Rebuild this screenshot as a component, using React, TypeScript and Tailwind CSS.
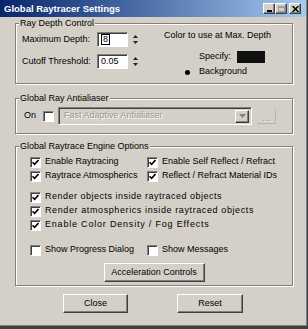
import React from "react";

const raised =
  "bg-[#d4d0c8] border border-t-white border-l-white border-r-[#404040] border-b-[#404040] shadow-[inset_-1px_-1px_0_#808080]";
const sunken =
  "border border-t-[#808080] border-l-[#808080] border-r-white border-b-white shadow-[inset_1px_1px_0_#404040]";

function Check({ on }: { on?: boolean }) {
  return (
    <span className={`w-[11px] h-[11px] shrink-0 bg-white flex items-center justify-center ${sunken}`}>
      {on && (
        <svg width="7" height="7" viewBox="0 0 7 7">
          <path d="M0.5 3.2 L2.6 5.3 L6.5 1" fill="none" stroke="#000" strokeWidth="1.6" />
        </svg>
      )}
    </span>
  );
}

function Opt({ on, label, wide }: { on?: boolean; label: string; wide?: string }) {
  return (
    <div className="flex items-center gap-[4px] h-[14px] whitespace-nowrap">
      <Check on={on} />
      <span className={wide}>{label}</span>
    </div>
  );
}

function Group({ title, h, mt, children }: { title: string; h: string; mt: string; children: React.ReactNode }) {
  return (
    <fieldset
      className={`ml-[15px] w-[278px] ${h} ${mt} border border-[#808080] shadow-[inset_1px_1px_0_#fff,1px_1px_0_#fff]`}
    >
      <legend className="ml-[3px] px-[1px] bg-[#d4d0c8] leading-[11px]">{title}</legend>
      {children}
    </fieldset>
  );
}

function Spinner({ value, boxed }: { value: string; boxed?: boolean }) {
  return (
    <div className="flex items-center gap-[3px]">
      <div className={`w-[31px] h-[15px] bg-white flex items-center pl-[3px] ${sunken}`}>
        {boxed ? <span className="border border-black px-[1px] leading-[9px]">{value}</span> : <span>{value}</span>}
      </div>
      <div className="w-[8px] h-[15px] flex flex-col justify-center gap-[3px] items-center">
        <svg width="5" height="3" viewBox="0 0 5 3">
          <path d="M0 3 L2.5 0 L5 3 Z" fill="#222" />
        </svg>
        <svg width="5" height="3" viewBox="0 0 5 3">
          <path d="M0 0 L2.5 3 L5 0 Z" fill="#222" />
        </svg>
      </div>
    </div>
  );
}

export default function App() {
  return (
    <div className="w-[308px] h-[329px] bg-[#d4d0c8] border-r border-b-[3px] border-[#404040] font-['Liberation_Sans',Arial,sans-serif] text-[9px] text-black overflow-hidden">
      <div className="h-full border-r border-b border-[#808080] flex flex-col">
        {/* title bar */}
        <div className="h-[17px] shrink-0 flex items-center justify-between pl-[4px] pr-[5px] bg-gradient-to-r from-[#0a246a] to-[#a6caf0]">
          <span className="text-white font-bold text-[9.5px] leading-none">Global Raytracer Settings</span>
          <div className="flex items-center gap-[2px]">
            <div className="flex">
              <div className={`w-[12px] h-[11px] flex items-end justify-center pb-[1px] ${raised}`}>
                <div className="w-[5px] h-[2px] bg-black" />
              </div>
              <div className={`w-[12px] h-[11px] flex items-center justify-center ${raised}`}>
                <div className="w-[7px] h-[6px] border border-[#a0a0a0] border-t-2" />
              </div>
            </div>
            <div className={`w-[12px] h-[11px] flex items-center justify-center ${raised}`}>
              <svg width="7" height="6" viewBox="0 0 7 6">
                <path d="M0.5 0 L6.5 6 M6.5 0 L0.5 6" stroke="#000" strokeWidth="1.5" />
              </svg>
            </div>
          </div>
        </div>

        <Group title="Ray Depth Control" h="h-[66px]" mt="mt-[1px]">
          <div className="flex pt-[1px]">
            <div className="w-[148px] pl-[6px] pt-[2px] flex flex-col gap-[7px]">
              <div className="flex items-center">
                <span className="w-[75px]">Maximum Depth:</span>
                <Spinner value="8" boxed />
              </div>
              <div className="flex items-center">
                <span className="w-[75px]">Cutoff Threshold:</span>
                <Spinner value="0.05" />
              </div>
            </div>
            <div className="flex flex-col">
              <span className="leading-[11px]">Color to use at Max. Depth</span>
              <div className="flex items-center mt-[9px] pl-[35px]">
                <span className="w-[38px]">Specify:</span>
                <div className="w-[28px] h-[12px] bg-[#111]" />
              </div>
              <div className="flex items-center mt-[3px] h-[11px] pl-[21px]">
                <span className="w-[14px] flex">
                  <span className="w-[5px] h-[5px] rounded-full bg-black" />
                </span>
                <span>Background</span>
              </div>
            </div>
          </div>
        </Group>

        <Group title="Global Ray Antialiaser" h="h-[41px]" mt="mt-[9px]">
          <div className="flex items-center pt-[3px] pl-[8px] h-[21px]">
            <span className="w-[19px]">On</span>
            <Check />
            <div className={`ml-[4px] w-[194px] h-[18px] bg-[#d4d0c8] flex items-center justify-between pl-[5px] pr-[2px] ${sunken}`}>
              <span className="text-[#9a978f] [text-shadow:1px_1px_0_#fff]">Fast Adaptive Antialiaser</span>
              <div className={`w-[14px] h-[13px] flex items-center justify-center ${raised}`}>
                <svg width="7" height="4" viewBox="0 0 7 4">
                  <path d="M0 0 L3.5 4 L7 0 Z" fill="#808080" />
                </svg>
              </div>
            </div>
            <div className="ml-[5px] w-[19px] h-[15px] flex items-end justify-center border-b border-r border-[#b8b5ae] text-[#9a978f] [text-shadow:1px_1px_0_#fff] leading-[10px]">
              ...
            </div>
          </div>
        </Group>

        <Group title="Global Raytrace Engine Options" h="h-[145px]" mt="mt-[7px]">
          <div className="pl-[14px] pt-[3px] flex flex-col">
            <div className="flex">
              <div className="w-[117px]">
                <Opt on label="Enable Raytracing" />
              </div>
              <Opt on label="Enable Self Reflect / Refract" />
            </div>
            <div className="flex">
              <div className="w-[117px]">
                <Opt on label="Raytrace Atmospherics" />
              </div>
              <Opt on label="Reflect / Refract Material IDs" />
            </div>
            <div className="mt-[7px]">
              <Opt on label="Render objects inside raytraced objects" wide="tracking-[0.5px]" />
            </div>
            <Opt on label="Render atmospherics inside raytraced objects" wide="tracking-[0.6px]" />
            <Opt on label="Enable Color Density / Fog Effects" wide="tracking-[0.8px]" />
            <div className="flex mt-[11px]">
              <div className="w-[117px]">
                <Opt label="Show Progress Dialog" />
              </div>
              <Opt label="Show Messages" />
            </div>
          </div>
          <div className="flex justify-center mt-[6px]">
            <div className={`w-[101px] h-[19px] flex items-center justify-center ${raised}`}>Acceleration Controls</div>
          </div>
        </Group>

        <div className="flex pl-[63px] mt-[8px]">
          <div className={`w-[65px] h-[19px] flex items-center justify-center ${raised}`}>Close</div>
          <div className={`ml-[49px] w-[66px] h-[19px] flex items-center justify-center ${raised}`}>Reset</div>
        </div>
      </div>
    </div>
  );
}
